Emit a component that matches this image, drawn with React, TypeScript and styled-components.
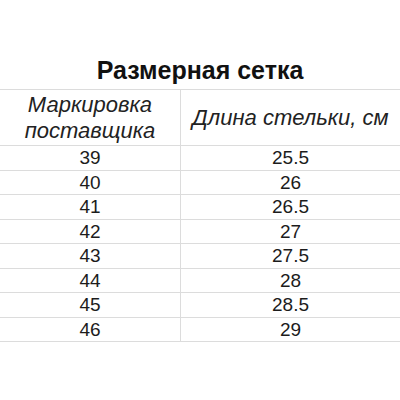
import { Fragment } from 'react';
import styled, { createGlobalStyle } from 'styled-components';

const GlobalStyle = createGlobalStyle`
  body {
    margin: 0;
    background: #fff;
    font-family: "Liberation Sans", Arial, sans-serif;
  }
`;

const Page = styled.div`
  width: 400px;
  height: 400px;
  background: #fff;
  padding-top: 55px;
  box-sizing: border-box;
`;

const Title = styled.h1`
  margin: 0 0 4px;
  font-size: 25px;
  line-height: 30px;
  font-weight: 700;
  color: #111;
  text-align: center;
`;

const Grid = styled.div`
  display: grid;
  grid-template-columns: 181px 1fr;
  border-top: 1px solid #dcdcdc;
`;

const HeadCell = styled.div<{ $first?: boolean }>`
  height: 56px;
  display: flex;
  align-items: center;
  justify-content: center;
  text-align: center;
  font-style: italic;
  font-size: 22px;
  line-height: 26px;
  color: #222;
  border-bottom: 1px solid #dcdcdc;
  border-right: ${(p) => (p.$first ? '1px solid #dcdcdc' : 'none')};
  padding-top: 1px;
  box-sizing: border-box;
`;

const Cell = styled.div<{ $first?: boolean }>`
  height: 24.5px;
  display: flex;
  align-items: center;
  justify-content: center;
  font-size: 19px;
  color: #1c1c1c;
  border-bottom: 1px solid #dcdcdc;
  border-right: ${(p) => (p.$first ? '1px solid #dcdcdc' : 'none')};
  box-sizing: border-box;
  padding-top: 1px;
`;

const rows: [string, string][] = [
  ['39', '25.5'],
  ['40', '26'],
  ['41', '26.5'],
  ['42', '27'],
  ['43', '27.5'],
  ['44', '28'],
  ['45', '28.5'],
  ['46', '29'],
];

export default function App() {
  return (
    <Page>
      <GlobalStyle />
      <Title>Размерная сетка</Title>
      <Grid>
        <HeadCell $first>
          Маркировка
          <br />
          поставщика
        </HeadCell>
        <HeadCell>Длина стельки, см</HeadCell>
        {rows.map(([size, length]) => (
          <Fragment key={size}>
            <Cell $first>{size}</Cell>
            <Cell>{length}</Cell>
          </Fragment>
        ))}
      </Grid>
    </Page>
  );
}
